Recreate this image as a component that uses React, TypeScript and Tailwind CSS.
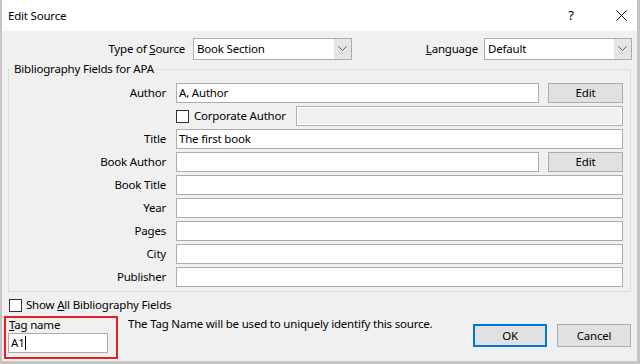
import React from 'react';

const font = { fontFamily: '"Noto Sans", "Open Sans", sans-serif' };

const Chevron: React.FC = () => (
  <svg width="9" height="6" viewBox="0 0 9 6" className="text-[#606060]">
    <path d="M0.5 0.5 L4.5 4.5 L8.5 0.5" fill="none" stroke="currentColor" strokeWidth="1" />
  </svg>
);

const Select: React.FC<{ value: string; width: string }> = ({ value, width }) => (
  <div className={`${width} h-[22px] flex border border-[#adadad] bg-white`}>
    <div className="flex-1 pl-[3px] leading-[20px]">{value}</div>
    <div className="w-[17px] bg-[#e5e5e5] flex items-center justify-center">
      <Chevron />
    </div>
  </div>
);

const Input: React.FC<{ value?: string; width?: string }> = ({ value = '', width = 'flex-1' }) => (
  <div className={`${width} h-[20px] border border-[#adadad] bg-white pl-[2px] leading-[18px]`}>{value}</div>
);

const WinButton: React.FC<{ label: string; width?: string; primary?: boolean; height?: string }> = ({
  label,
  width = 'w-[75px]',
  primary,
  height = 'h-[20px]',
}) => (
  <div
    className={`${width} ${height} flex items-center justify-center bg-[#e1e1e1] ${
      primary ? 'border-2 border-[#0078d7]' : 'border border-[#adadad]'
    }`}
  >
    {label}
  </div>
);

const CheckBox: React.FC = () => <div className="w-[13px] h-[13px] border border-[#333333] bg-white shrink-0" />;

const Row: React.FC<{ label: string; children: React.ReactNode }> = ({ label, children }) => (
  <div className="flex items-center h-[20px]">
    <div className="w-[158px] text-right pr-[1px]">{label}</div>
    <div className="flex-1 flex items-center gap-[9px] ml-[9px]">{children}</div>
  </div>
);

export default function App() {
  return (
    <div
      style={font}
      className="w-[640px] h-[364px] flex flex-col bg-[#f0f0f0] border-l-2 border-r-[3px] border-b-[3px] border-[#c4c4c4] text-[11.5px] tracking-[-0.2px] text-black overflow-hidden"
    >
      {/* title bar */}
      <div className="h-[31px] bg-white flex items-center pl-[6px] shrink-0">
        <span className="flex-1">Edit Source</span>
        <span className="w-[10px] text-center mr-[40px] text-[13px]">?</span>
        <svg width="11" height="11" viewBox="0 0 11 11" className="mr-[10px]">
          <path d="M0.5 0.5 L10.5 10.5 M10.5 0.5 L0.5 10.5" stroke="#111" strokeWidth="1" />
        </svg>
      </div>

      {/* type / language */}
      <div className="flex items-center mt-[7px] pr-[5px]">
        <div className="w-[183px] text-right">
          Type of <u>S</u>ource
        </div>
        <div className="ml-[8px]">
          <Select value="Book Section" width="w-[159px]" />
        </div>
        <div className="flex-1 text-right pr-[6px]">
          <u>L</u>anguage
        </div>
        <Select value="Default" width="w-[148px]" />
      </div>

      {/* bibliography group */}
      <fieldset className="ml-[6px] mr-[6px] mt-[1px] border border-[#dcdcdc] pl-0 pr-[7px] pt-[6px] pb-[4px]">
        <legend className="ml-[3px] px-[2px] leading-[16px]">Bibliography Fields for APA</legend>
        <div className="flex flex-col gap-[3px]">
          <Row label="Author">
            <Input value="A, Author" width="w-[363px]" />
            <WinButton label="Edit" />
          </Row>
          <div className="flex items-center h-[20px] ml-[167px]">
            <CheckBox />
            <span className="ml-[5px] w-[102px]">Corporate Author</span>
            <div className="flex-1 h-[20px] border border-[#adadad] bg-[#f0f0f0] shadow-[inset_0_0_0_1px_#ffffff]" />
          </div>
          <Row label="Title">
            <Input value="The first book" />
          </Row>
          <Row label="Book Author">
            <Input width="w-[363px]" />
            <WinButton label="Edit" />
          </Row>
          <Row label="Book Title">
            <Input />
          </Row>
          <Row label="Year">
            <Input />
          </Row>
          <Row label="Pages">
            <Input />
          </Row>
          <Row label="City">
            <Input />
          </Row>
          <Row label="Publisher">
            <Input />
          </Row>
        </div>
      </fieldset>

      {/* show all */}
      <div className="flex items-center mt-[6px] ml-[7px] h-[14px]">
        <CheckBox />
        <span className="ml-[4px]">
          Show <u>A</u>ll Bibliography Fields
        </span>
      </div>

      {/* tag name + buttons */}
      <div className="flex mt-[4px] ml-[2px]">
        <div className="w-[114px] h-[43px] border-2 border-[#e3202a] pl-[2px] flex flex-col shrink-0">
          <div className="leading-[14px] pl-[1px]">
            <u>T</u>ag name
          </div>
          <div className="w-[100px] h-[20px] mt-[1px] border border-[#adadad] bg-white pl-[2px] leading-[18px] flex items-center">
            <span>A1</span>
            <span className="w-px h-[14px] bg-black" />
          </div>
        </div>
        <div className="ml-[10px] pt-[1px] leading-[14px] w-[345px] shrink-0">
          The Tag Name will be used to uniquely identify this source.
        </div>
        <div className="flex gap-[10px] mt-[8px]">
          <WinButton label="OK" primary width="w-[74px]" height="h-[23px]" />
          <WinButton label="Cancel" width="w-[74px]" height="h-[23px]" />
        </div>
      </div>
    </div>
  );
}
